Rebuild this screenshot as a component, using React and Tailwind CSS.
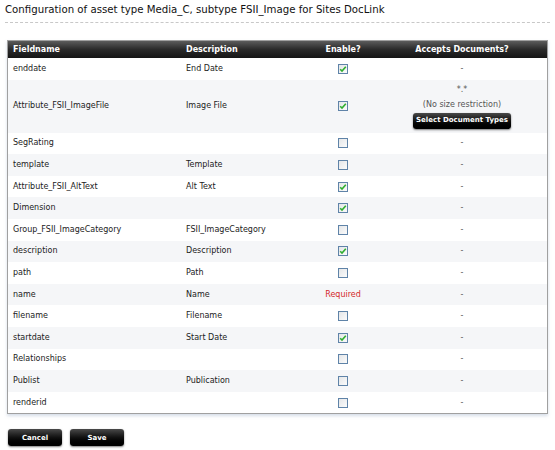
import React from 'react';

const rows = [
    { field: 'enddate', desc: 'End Date', enabled: true },
    { field: 'Attribute_FSII_ImageFile', desc: 'Image File', enabled: true, docs: true },
    { field: 'SegRating', desc: '', enabled: false },
    { field: 'template', desc: 'Template', enabled: false },
    { field: 'Attribute_FSII_AltText', desc: 'Alt Text', enabled: true },
    { field: 'Dimension', desc: '', enabled: true },
    { field: 'Group_FSII_ImageCategory', desc: 'FSII_ImageCategory', enabled: false },
    { field: 'description', desc: 'Description', enabled: true },
    { field: 'path', desc: 'Path', enabled: false },
    { field: 'name', desc: 'Name', required: true },
    { field: 'filename', desc: 'Filename', enabled: false },
    { field: 'startdate', desc: 'Start Date', enabled: true },
    { field: 'Relationships', desc: '', enabled: false },
    { field: 'Publist', desc: 'Publication', enabled: false },
    { field: 'renderid', desc: '', enabled: false },
];

const cols = 'grid grid-cols-[173px_128px_68px_1fr]';

function Checkbox({ checked }) {
    return (
        <span className="inline-flex w-[10px] h-[10px] border border-[#5f83a8] bg-gradient-to-br from-[#e4e6e8] to-[#fbfbfb] items-center justify-center">
            {checked && (
                <svg width="8" height="8" viewBox="0 0 8 8">
                    <path d="M1.2 4.2 L3 6 L6.8 1.8" fill="none" stroke="#2fae2f" strokeWidth="1.6" />
                </svg>
            )}
        </span>
    );
}

function DarkButton({ children, className = '' }) {
    return (
        <button className={`rounded-[3px] bg-gradient-to-b from-[#4a4a4a] via-[#111] to-[#000] text-white font-bold text-[7px] whitespace-nowrap shadow-[0_1px_2px_rgba(0,0,0,0.5)] ${className}`}>
            {children}
        </button>
    );
}

export default function App() {
    return (
        <div className="w-[555px] h-[450px] bg-white text-[#222] font-['DejaVu_Sans',sans-serif] overflow-hidden">
            <div className="px-[5px] pt-[3px]">
                <h1 className="text-[10.2px] text-[#111] leading-[14px]">
                    Configuration of asset type Media_C, subtype FSII_Image for Sites DocLink
                </h1>
                <div className="mt-[5px] border-t border-dashed border-[#c8c8c8]" />
            </div>

            <div className="ml-[7px] mt-[17px] w-[541px] border border-[#a0a0a0] shadow-[0_2px_3px_rgba(140,160,190,0.35)]">
                <div className={`${cols} h-[17px] items-center bg-gradient-to-b from-[#5c5c5c] via-[#2a2a2a] to-[#151515] text-white text-[8px] font-bold`}>
                    <div className="pl-[5px]">Fieldname</div>
                    <div className="pl-[5px]">Description</div>
                    <div className="text-center">Enable?</div>
                    <div className="text-center">Accepts Documents?</div>
                </div>
                {rows.map((r, i) => (
                    <div
                        key={r.field}
                        className={`${cols} items-center text-[8px] ${r.docs ? 'h-[53px]' : 'h-[21.6px]'} ${i % 2 ? 'bg-[#f5f6f8]' : 'bg-white'}`}
                    >
                        <div className="pl-[5px]">{r.field}</div>
                        <div className="pl-[5px]">{r.desc}</div>
                        <div className="flex justify-center">
                            {r.required ? <span className="text-[#d42a2a]">Required</span> : <Checkbox checked={r.enabled} />}
                        </div>
                        {r.docs ? (
                            <div className="self-start pt-[5px] flex flex-col items-center text-[#555]">
                                <span className="leading-[10px]">*.*</span>
                                <span className="leading-[10px] mt-[5px]">(No size restriction)</span>
                                <DarkButton className="mt-[3px] w-[98px] h-[16px]">Select Document Types</DarkButton>
                            </div>
                        ) : (
                            <div className="flex justify-center text-[#555]">-</div>
                        )}
                    </div>
                ))}
            </div>

            <div className="flex gap-[8px] ml-[8px] mt-[15px]">
                <DarkButton className="w-[54px] h-[17px]">Cancel</DarkButton>
                <DarkButton className="w-[54px] h-[17px]">Save</DarkButton>
            </div>
        </div>
    );
}
